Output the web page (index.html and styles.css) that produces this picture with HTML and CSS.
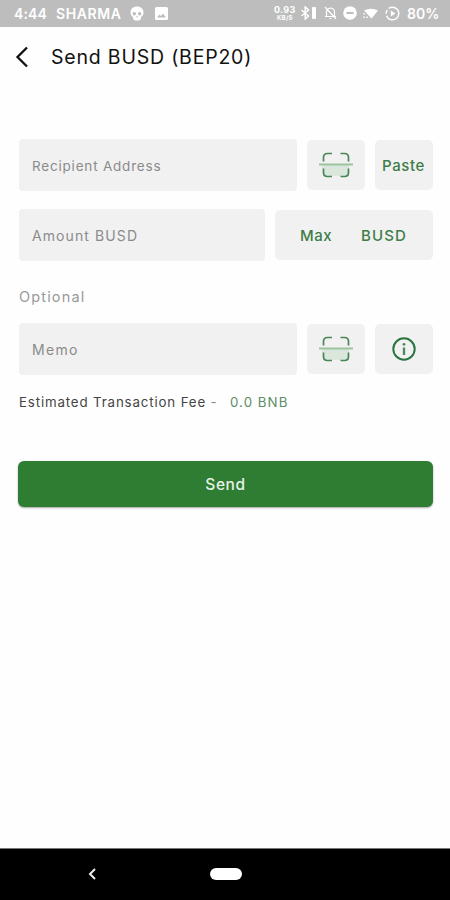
FILE: index.html
```html
<!DOCTYPE html>
<html lang="en">
<head>
<meta charset="utf-8">
<title>Send BUSD</title>
<link rel="stylesheet" href="styles.css">
</head>
<body>
<svg class="defs" width="0" height="0">
  <symbol id="scan" viewBox="0 0 34 26">
    <path d="M3 13h27v6q0 5-5 5H9q-5 0-5-5z" fill="#43a047" opacity=".12"/>
    <path d="M4.500 9.500V5.500q0-4 4-4H13M21.500 1.500h4q4 0 4 4V9.500M4.500 16.500v4q0 4 4 4H13M21.500 24.500h4q4 0 4-4V16.500" fill="none" stroke="#4a8659" stroke-width="1.700"/>
    <path d="M0 12.500h34" stroke="#9cc3a0" stroke-width="2"/>
  </symbol>
</svg>
<div class="phone">
  <div class="status">
    <span class="clock">4:44</span><span class="carrier">SHARMA</span>
    <svg class="skull" viewBox="0 0 14 15"><path fill="#fff" fill-rule="evenodd" d="M7 .5c4 0 6.500 2.500 6.500 6 0 2-.8 3.500-2.500 4.500v2l-2 1.500H5L3 13v-2C1.300 10 .5 8.500.5 6.500c0-3.500 2.500-6 6.500-6zM4.300 6a1.700 1.700 0 1 0 0 3.400 1.700 1.700 0 0 0 0-3.400zm5.400 0a1.700 1.700 0 1 0 0 3.400 1.700 1.700 0 0 0 0-3.400zM7 9.500L6 11.300h2z"/></svg>
    <svg class="photo" viewBox="0 0 13 13"><path fill="#fff" fill-rule="evenodd" d="M1.500 0h10q1.500 0 1.500 1.500v10q0 1.500-1.500 1.500h-10Q0 13 0 11.500v-10Q0 0 1.500 0zM2 10.500h9L8 6.500 6 9 4.500 7.500z"/></svg>
    <span class="speed"><b>0.93</b><b class="unit">KB/S</b></span>
    <svg class="bt" viewBox="0 0 17 14"><path d="M1.500 4l7 6L5.200 13V1l3.300 3-7 6" fill="none" stroke="#fff" stroke-width="1.500"/><rect x="12" y="1" width="4" height="12" rx="1" fill="#fff"/></svg>
    <svg class="bell" viewBox="0 0 13 14"><path d="M2.500 10.500h8V6q0-3.500-4-4-4 .5-4 4zM1 10.500h11M5.500 12.500h2M1 1l11 12" fill="none" stroke="#fff" stroke-width="1.200"/></svg>
    <svg class="dnd" viewBox="0 0 14 14"><circle cx="7" cy="7" r="6.800" fill="#fff"/><path d="M3.500 7h7" stroke="#bdbdbd" stroke-width="2"/></svg>
    <svg class="wifi" viewBox="0 0 15 12"><path d="M1 3.500Q8 0 15 3.500L8.500 11.500z" fill="#fff"/><path d="M1 6v1.500M1 9.500V11M4 9.500V11" stroke="#fff" stroke-width="1.500"/></svg>
    <svg class="saver" viewBox="0 0 15 15"><circle cx="7.500" cy="7.500" r="6.300" fill="none" stroke="#fff" stroke-width="1.400" stroke-dasharray="17 2 4 2"/><path d="M5.800 4.500l4.500 3-4.500 3z" fill="#fff"/></svg>
    <span class="battery">80%</span>
  </div>
  <header class="header">
    <svg class="back" viewBox="0 0 14 22"><path d="M12 1.500L2.500 11l9.500 9.500" fill="none" stroke="#111" stroke-width="2.300"/></svg>
    <h1>Send BUSD (BEP20)</h1>
  </header>
  <main>
    <div class="row">
      <div class="field"><span class="t-recipient">Recipient Address</span></div>
      <div class="tile"><svg class="scan"><use href="#scan"/></svg></div>
      <div class="tile"><span class="t-paste">Paste</span></div>
    </div>
    <div class="row amount">
      <div class="field"><span class="t-amount">Amount BUSD</span></div>
      <div class="tile units"><span class="t-max">Max</span><span class="t-busd">BUSD</span></div>
    </div>
    <div class="optional"><span>Optional</span></div>
    <div class="row">
      <div class="field"><span class="t-memo">Memo</span></div>
      <div class="tile"><svg class="scan"><use href="#scan"/></svg></div>
      <div class="tile"><svg class="info" viewBox="0 0 24 24"><circle cx="12" cy="12" r="10.700" fill="none" stroke="#2a7540" stroke-width="2"/><path d="M12 10.500V18" stroke="#4a8a59" stroke-width="2.300"/><circle cx="12" cy="7.300" r="1.400" fill="#4a8a59"/></svg></div>
    </div>
    <div class="fee"><span class="fee-label">Estimated Transaction Fee <i class="dash">-</i></span><span class="fee-value">0.0 BNB</span></div>
    <div class="send"><span>Send</span></div>
  </main>
  <nav class="nav">
    <svg class="nav-back" viewBox="0 0 8 12"><path d="M7 1L2 6l5 5" fill="none" stroke="#eee" stroke-width="2"/></svg>
    <div class="pill"></div>
  </nav>
</div>
</body>
</html>
```
FILE: styles.css
```css
* { box-sizing: border-box; }
body { margin: 0; background: #fff; font-family: Inter, "Open Sans", sans-serif; }
.defs { display: none; }
.phone { width: 450px; height: 900px; display: flex; flex-direction: column; overflow: hidden; background: #fefefe; }
span, h1 { white-space: nowrap; }
svg { flex: none; display: block; }

.status { height: 27px; flex: none; background: #bdbdbd; color: #fff; display: flex; align-items: center; padding: 0 0 1px 14px; font-size: 14px; font-weight: 600; }
.clock { width: 42px; letter-spacing: .1px; }
.carrier { width: 74px; letter-spacing: .6px; }
.skull { width: 14px; height: 15px; }
.photo { width: 13px; height: 13px; margin-left: 11px; }
.speed { width: 23px; margin-left: 106px; display: flex; flex-direction: column; font-size: 9px; line-height: 8px; }
.speed b { font-weight: 700; letter-spacing: .3px; }
.speed .unit { font-size: 6px; line-height: 7px; padding-left: 3px; }
.bt { width: 17px; height: 14px; margin-left: 3px; }
.bell { width: 13px; height: 14px; margin-left: 7px; }
.dnd { width: 14px; height: 14px; margin-left: 6px; }
.wifi { width: 15px; height: 12px; margin-left: 6px; }
.saver { width: 15px; height: 15px; margin-left: 7px; }
.battery { margin-left: 7px; }

.header { height: 62px; flex: none; display: flex; align-items: center; padding: 0 0 2px 15px; }
.back { width: 14px; height: 22px; }
h1 { margin: 0 0 1px 22px; font-size: 19.500px; font-weight: 400; color: #111; letter-spacing: .8px; }

main { flex: 1; padding: 50px 17px 0 19px; }
.row { display: flex; gap: 10px; height: 52px; align-items: center; }
.amount { margin-top: 18px; }
.field { flex: 1; height: 52px; display: flex; align-items: center; padding: 1px 13px 0; background: #f1f1f1; border-radius: 4px; color: #8b8b8b; font-size: 13.500px; }
.t-recipient { letter-spacing: .8px; }
.t-amount { font-size: 14px; letter-spacing: 1.100px; }
.t-memo { font-size: 14px; letter-spacing: 1.300px; }
.tile { width: 58px; height: 50px; display: flex; align-items: center; justify-content: center; background: #f1f1f1; border-radius: 5px; color: #3d7d49; font-size: 15px; font-weight: 500; }
.t-paste { letter-spacing: .6px; margin-right: 1px; }
.units { width: 158px; justify-content: flex-start; padding-left: 25px; }
.t-max { width: 61px; letter-spacing: .5px; }
.t-busd { letter-spacing: 1.100px; }
.scan { width: 34px; height: 26px; }
.info { width: 24px; height: 24px; margin-right: 1px; }
.optional { height: 62px; padding-top: 9px; display: flex; align-items: center; font-size: 14.500px; letter-spacing: 1.150px; color: #999; }
.fee { display: flex; margin-top: 17px; height: 20px; align-items: center; font-size: 13.300px; letter-spacing: .85px; color: #444; }
.fee-label { width: 211px; }
.dash { font-style: normal; color: #888; }
.fee-value { color: #5c8d64; letter-spacing: 1.050px; }
.send { margin-top: 49px; height: 46px; display: flex; align-items: center; justify-content: center; margin-left: -1px; background: #2e7d32; border-radius: 6px; color: #e6f2e6; font-size: 15.500px; letter-spacing: .6px; font-weight: 500; box-shadow: 0 1px 2px rgba(0, 0, 0, .35); }

.nav { height: 52px; flex: none; background: #000; border-top: 1px solid #777; display: flex; align-items: center; padding: 0 0 1px 88px; }
.nav-back { width: 8px; height: 12px; }
.pill { width: 32px; height: 12px; margin-left: 114px; border-radius: 6px; background: #fff; }
```
